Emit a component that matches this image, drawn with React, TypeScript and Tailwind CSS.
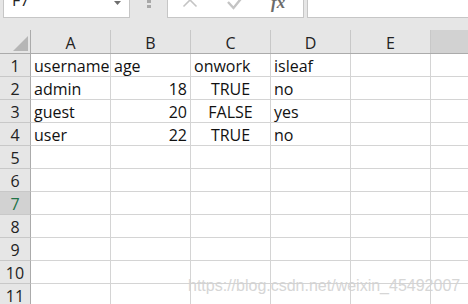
import React from "react";

const cols = ["A", "B", "C", "D", "E"];

type Cell = { v: string; align?: "left" | "right" | "center" };

const data: Cell[][] = [
  [{ v: "username" }, { v: "age" }, { v: "onwork" }, { v: "isleaf" }],
  [{ v: "admin" }, { v: "18", align: "right" }, { v: "TRUE", align: "center" }, { v: "no" }],
  [{ v: "guest" }, { v: "20", align: "right" }, { v: "FALSE", align: "center" }, { v: "yes" }],
  [{ v: "user" }, { v: "22", align: "right" }, { v: "TRUE", align: "center" }, { v: "no" }],
];

const alignClass = {
  left: "justify-start pl-[3px]",
  right: "justify-end pr-[3px]",
  center: "justify-center",
};

function FormulaBar() {
  return (
    <div className="flex h-[18px]">
      <div className="ml-[3px] w-[127px] bg-white border border-t-0 border-[#c6c6c6] flex items-start justify-between pl-[8px] pr-[8px] overflow-hidden">
        <span className="-mt-[10px] text-[16px] leading-[20px] text-[#222]">F7</span>
        <svg width="7" height="5" viewBox="0 0 7 5" className="mt-[1px]">
          <path d="M0 0 L7 0 L3.5 4 Z" fill="#6e6e6e" />
        </svg>
      </div>
      <div className="w-[37px] flex flex-col items-center gap-[2px]">
        <div className="w-[4px] h-[3px] bg-[#a8a8a8]" />
        <div className="w-[4px] h-[3px] bg-[#a8a8a8]" />
      </div>
      <div className="w-[137px] bg-white border border-t-0 border-[#c6c6c6] flex items-start overflow-hidden">
        <svg width="16" height="16" viewBox="0 0 16 16" className="ml-[14px] -mt-[8px]">
          <path d="M1.5 1.5 L14.5 14.5 M14.5 1.5 L1.5 14.5" stroke="#c4c4c4" strokeWidth="1.6" fill="none" />
        </svg>
        <svg width="18" height="16" viewBox="0 0 18 16" className="ml-[29px] -mt-[6px]">
          <path d="M1 8 L6.5 14 L17 1" stroke="#c4c4c4" strokeWidth="2.4" fill="none" />
        </svg>
        <span className="ml-[26px] -mt-[7px] text-[17px] leading-[20px] italic font-bold text-[#6b6b6b] [font-family:'Liberation_Serif',serif]">
          fx
        </span>
      </div>
      <div className="ml-[3px] flex-1 bg-white border border-t-0 border-r-0 border-[#c6c6c6]" />
    </div>
  );
}

function HeaderRow() {
  return (
    <div className="flex h-[24px] border-b border-[#ababab]">
      <div className="w-[31px] shrink-0 border-r border-[#ababab] flex items-end justify-end pr-[2px] pb-[2px]">
        <svg width="15" height="15" viewBox="0 0 15 15">
          <path d="M15 0 L15 15 L0 15 Z" fill="#b6b6b6" />
        </svg>
      </div>
      {cols.map((c) => (
        <div
          key={c}
          className="w-[80px] shrink-0 border-r border-[#c8c8c8] flex justify-center pt-[4px] text-[16px] leading-[19px] text-[#222]"
        >
          {c}
        </div>
      ))}
      <div className="flex-1 bg-[#d2d2d2]" />
    </div>
  );
}

function Row({ n, cells }: { n: number; cells: Cell[] }) {
  const selected = n === 7;
  return (
    <div className="flex h-[23px]">
      <div
        className={
          "w-[31px] shrink-0 border-r border-b border-r-[#ababab] border-b-[#c8c8c8] flex justify-center pt-[3px] text-[16px] leading-[19px] " +
          (selected ? "bg-[#d2d2d2] text-[#217346]" : "bg-[#e6e6e6] text-[#222]")
        }
      >
        {n}
      </div>
      {cols.map((c, i) => {
        const cell = cells[i];
        const a = cell?.align ?? "left";
        return (
          <div
            key={c}
            className={
              "w-[80px] shrink-0 bg-white border-r border-b border-[#d4d4d4] flex pt-[3px] text-[16px] leading-[19px] text-[#111] whitespace-nowrap " +
              alignClass[a]
            }
          >
            {cell?.v ?? ""}
          </div>
        );
      })}
      <div className="flex-1 bg-white border-b border-[#d4d4d4]" />
    </div>
  );
}

export default function App() {
  const rows = Array.from({ length: 11 }, (_, i) => i + 1);
  return (
    <div className="relative w-[468px] h-[304px] overflow-hidden bg-[#e6e6e6] [font-family:'Open_Sans',sans-serif]">
      <FormulaBar />
      <div className="h-[12px]" />
      <HeaderRow />
      {rows.map((n) => (
        <Row key={n} n={n} cells={data[n - 1] ?? []} />
      ))}
      <div className="absolute left-[188px] top-[274px] text-[16px] text-[#d2d2d2] opacity-90 whitespace-nowrap [font-family:'Liberation_Sans',sans-serif]">
        https://blog.csdn.net/weixin_45492007
      </div>
    </div>
  );
}
